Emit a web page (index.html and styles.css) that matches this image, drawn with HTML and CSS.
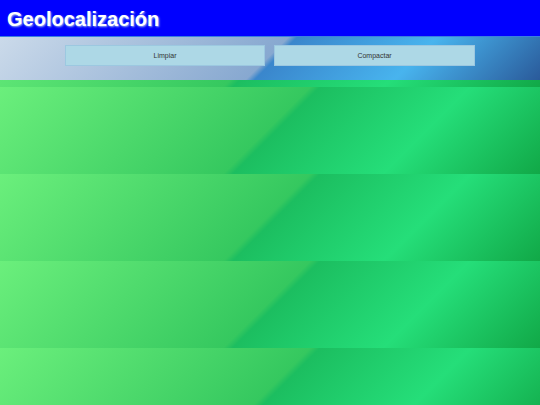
FILE: index.html
```html
<!DOCTYPE html>
<html lang="es">
<head>
<meta charset="utf-8">
<title>Geolocalización</title>
<link rel="stylesheet" href="styles.css">
</head>
<body>
<section class="panel panel-top">
  <header class="title-bar">
    <h1 class="title">Geolocalización</h1>
  </header>
  <nav class="toolbar">
    <button class="tool-btn" type="button">Limpiar</button>
    <button class="tool-btn" type="button">Compactar</button>
  </nav>
</section>
<section class="panel"></section>
<section class="panel"></section>
<section class="panel"></section>
<section class="panel panel-last"></section>
</body>
</html>
```

FILE: styles.css
```css
html, body {
  margin: 0;
  padding: 0;
}
html {
  overflow: hidden;
}
body {
  width: 540px;
  height: 405px;
  overflow: hidden;
  font-family: "Liberation Sans", Arial, sans-serif;
  background: #1cbe60;
}
.panel {
  height: 87px;
  background: linear-gradient(135deg, #6bef7c 0%, #35c85f 49.5%, #1cbe60 51%, #25de79 75%, #11a847 100%);
}
.panel-last {
  height: 57px;
  background-size: 540px 87px;
  background-repeat: no-repeat;
}
.panel-top {
  display: flex;
  flex-direction: column;
}
.title-bar {
  height: 36px;
  background: #0000ff;
  border-bottom: 1px solid #3a7ee0;
  display: flex;
  align-items: center;
  padding-left: 7px;
}
.title {
  margin: 0;
  font-size: 20px;
  font-weight: bold;
  color: #ffffff;
  line-height: 20px;
  padding-top: 1px;
  text-shadow: 1px 1px 2px #9ab8f0;
}
.toolbar {
  height: 43px;
  box-sizing: border-box;
  padding-top: 8px;
  display: flex;
  justify-content: center;
  align-items: flex-start;
  gap: 9px;
  background: linear-gradient(135deg, #cbdaea 0%, #87a8d0 49.5%, #3a86cc 51%, #48b4ee 75%, #2a5a9a 100%);
}
.tool-btn {
  width: 200px;
  height: 21px;
  margin: 0;
  padding: 0;
  border: 1px solid #9cc8e0;
  background: #add8e6;
  font-family: "Liberation Sans", Arial, sans-serif;
  font-size: 7px;
  color: #333333;
  cursor: pointer;
}
.tool-btn + .tool-btn {
  width: 201px;
}
```
